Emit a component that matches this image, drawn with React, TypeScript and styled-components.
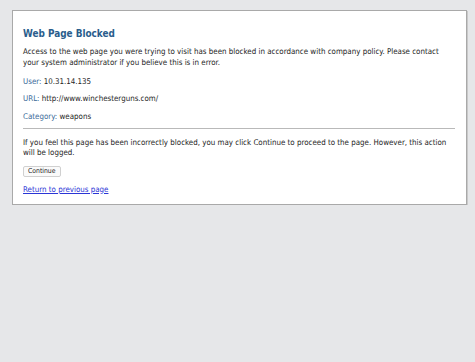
import styled, { createGlobalStyle } from "styled-components";

const GlobalStyle = createGlobalStyle`
  html, body {
    margin: 0;
    padding: 0;
    background: #e6e7e9;
    font-family: "DejaVu Sans Condensed", "Liberation Sans", sans-serif;
  }
`;

const Page = styled.div`
  padding: 10px 9px 0 12px;
`;

const Card = styled.div`
  width: 432px;
  background: #ffffff;
  border: 1px solid #a9a9a9;
  box-shadow: 1px 1px 0 #c9c9c9;
  padding: 16px 11px 9px 10px;
  color: #1e1e1e;
  font-size: 7.9px;
  line-height: 10.5px;
`;

const Title = styled.h1`
  margin: 0 0 7px 0;
  font-size: 9.9px;
  line-height: 13px;
  font-weight: bold;
  color: #2a5d8c;
`;

const Text = styled.p<{ $gap?: number }>`
  margin: 0 0 ${(p) => p.$gap ?? 8.5}px 0;
`;

const Field = styled.div`
  margin-bottom: 7px;

  &:last-of-type {
    margin-bottom: 6px;
  }
`;

const Label = styled.span`
  color: #3a6a99;
`;

const Rule = styled.hr`
  margin: 0 0 8.5px 0;
  border: 0;
  border-top: 1px solid #b9b9b9;
`;

const Button = styled.button`
  display: block;
  margin: 0 0 7.5px 0;
  padding: 0 4px;
  height: 11px;
  font-family: inherit;
  font-size: 6.8px;
  line-height: 9px;
  color: #222;
  background: #fafafa;
  border: 1px solid #d0d0d0;
  border-radius: 2px;
`;

const BackLink = styled.a`
  color: #2b35d6;
  text-decoration: underline;
`;

const fields = [
  { label: "User:", value: "10.31.14.135" },
  { label: "URL:", value: "http://www.winchesterguns.com/" },
  { label: "Category:", value: "weapons" },
];

const App = () => {
  return (
    <>
      <GlobalStyle />
      <Page>
        <Card>
          <Title>Web Page Blocked</Title>
          <Text>
            Access to the web page you were trying to visit has been blocked in
            accordance with company policy. Please contact your system
            administrator if you believe this is in error.
          </Text>
          {fields.map((f) => (
            <Field key={f.label}>
              <Label>{f.label}</Label> {f.value}
            </Field>
          ))}
          <Rule />
          <Text $gap={7.5}>
            If you feel this page has been incorrectly blocked, you may click
            Continue to proceed to the page. However, this action will be
            logged.
          </Text>
          <Button>Continue</Button>
          <BackLink href="#">Return to previous page</BackLink>
        </Card>
      </Page>
    </>
  );
};

export default App;
